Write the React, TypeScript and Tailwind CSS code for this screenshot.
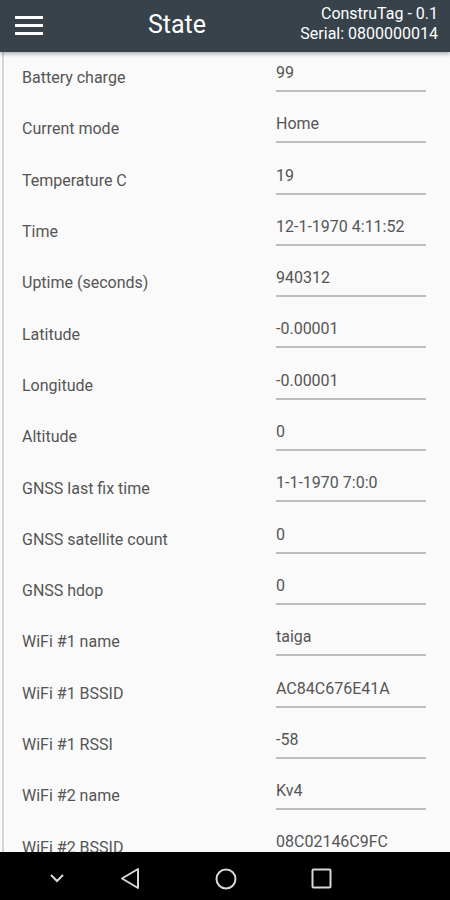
import React from 'react';

const rows: [string, string][] = [
  ['Battery charge', '99'],
  ['Current mode', 'Home'],
  ['Temperature C', '19'],
  ['Time', '12-1-1970 4:11:52'],
  ['Uptime (seconds)', '940312'],
  ['Latitude', '-0.00001'],
  ['Longitude', '-0.00001'],
  ['Altitude', '0'],
  ['GNSS last fix time', '1-1-1970 7:0:0'],
  ['GNSS satellite count', '0'],
  ['GNSS hdop', '0'],
  ['WiFi #1 name', 'taiga'],
  ['WiFi #1 BSSID', 'AC84C676E41A'],
  ['WiFi #1 RSSI', '-58'],
  ['WiFi #2 name', 'Kv4'],
  ['WiFi #2 BSSID', '08C02146C9FC'],
];

function StateRow({ label, value }: { label: string; value: string }) {
  return (
    <div className="flex h-[51.3px] shrink-0">
      <div className="flex w-[272px] items-center pl-[18px] pt-[1px] text-[16px] text-[#555]">{label}</div>
      <div className="w-[150px]">
        <div className="h-[40px] border-b-2 border-[#bdbdbd] pt-[11px] text-[16px] leading-[19px] text-[#555]">
          {value}
        </div>
      </div>
    </div>
  );
}

export default function App() {
  return (
    <div className="flex h-[900px] w-[450px] flex-col overflow-hidden bg-[#fafafa] font-['Roboto',sans-serif]">
      <header className="relative z-10 flex h-[52px] shrink-0 items-center bg-[#37424a] text-white shadow-[0_2px_4px_rgba(0,0,0,0.3)]">
        <button type="button" className="flex h-[52px] w-[57px] items-center justify-center pb-[2px]">
          <svg width="28" height="22" viewBox="0 0 28 22">
            <rect x="0" y="2" width="28" height="3" fill="#fff" />
            <rect x="0" y="10" width="28" height="3" fill="#fff" />
            <rect x="0" y="18" width="28" height="3" fill="#fff" />
          </svg>
        </button>
        <h1 className="ml-[91px] pb-[3px] text-[25px] leading-none">State</h1>
        <div className="ml-auto pb-[5px] pr-[12px] text-right text-[16px] leading-[20px]">
          <div>ConstruTag - 0.1</div>
          <div>Serial: 0800000014</div>
        </div>
      </header>

      <main className="ml-[2px] flex flex-1 flex-col overflow-hidden border-l-2 border-[#d6d6d6]">
        {rows.map(([label, value]) => (
          <StateRow key={label} label={label} value={value} />
        ))}
      </main>

      <nav className="flex h-[48px] shrink-0 items-center bg-black pl-[49px] text-[#d8d8d8]">
        <svg className="mt-[4px]" width="16" height="10" viewBox="0 0 16 10" fill="none" stroke="currentColor" strokeWidth="2">
          <path d="M2 2l6 6 6-6" />
        </svg>
        <svg className="ml-[55px] mt-[5px]" width="20" height="23" viewBox="0 0 20 23" fill="none" stroke="currentColor" strokeWidth="2" strokeLinejoin="round">
          <path d="M18 2v19L2 11.5z" />
        </svg>
        <svg className="ml-[75px] mt-[6px]" width="22" height="22" viewBox="0 0 22 22" fill="none" stroke="currentColor" strokeWidth="2">
          <circle cx="11" cy="11" r="9.5" />
        </svg>
        <svg className="ml-[74px] mt-[5px]" width="21" height="21" viewBox="0 0 21 21" fill="none" stroke="currentColor" strokeWidth="2">
          <rect x="1.5" y="1.5" width="18" height="18" rx="1" />
        </svg>
      </nav>
    </div>
  );
}
